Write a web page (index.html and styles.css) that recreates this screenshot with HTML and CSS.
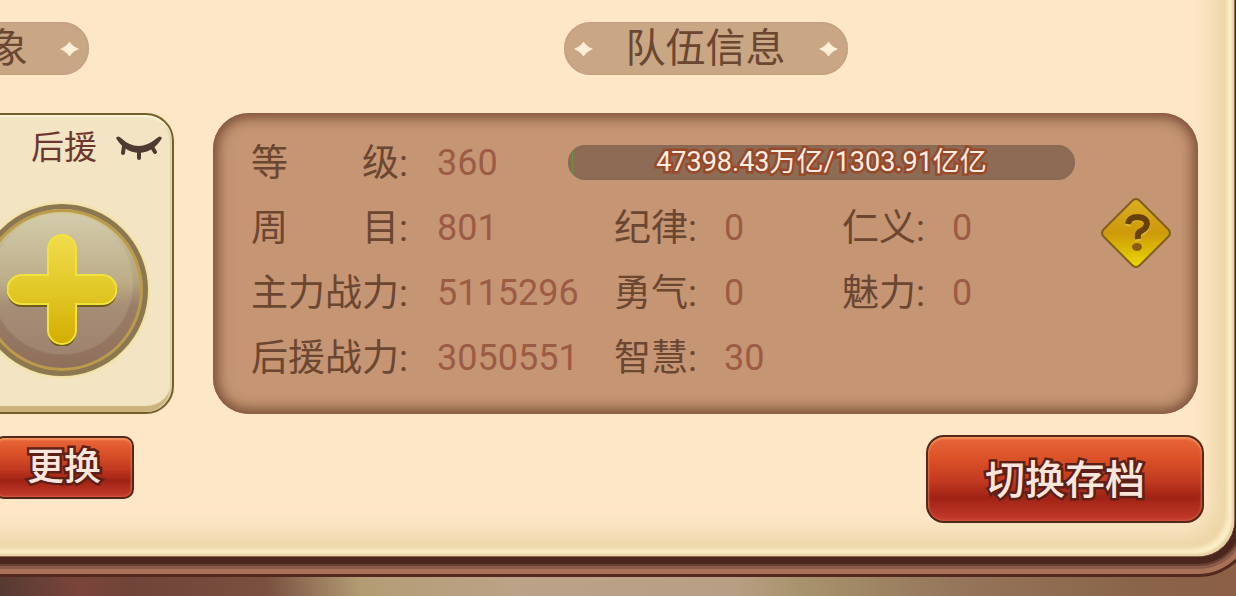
FILE: index.html
```html
<!DOCTYPE html>
<html lang="zh-CN">
<head>
    <meta charset="UTF-8">
    <meta name="viewport" content="width=device-width, initial-scale=1.0">
    <title>队伍信息</title>
    <link rel="stylesheet" href="styles.css">
</head>
<body>
    <main class="dialog">
        <section class="side">
            <h2 class="title side-title">
                象
                <svg class="star" viewBox="0 0 20 16"><path d="M10 0Q13 5 20 8Q13 11 10 16Q7 11 0 8Q7 5 10 0Z"/></svg>
            </h2>
            <div class="card">
                <div class="card-head">
                    <span class="card-name">后援</span>
                    <button class="eye" aria-label="隐藏">
                        <svg viewBox="0 0 46 24" width="46" height="24">
                            <path class="lid" d="M0 2Q2 -1 5 2Q22 18 41 2Q44 -1 46 2Q38 16 23 17Q8 16 0 2Z"/>
                            <path class="lash" d="M8 10L7 17M23 14V22M36 11L39 16"/>
                        </svg>
                    </button>
                </div>
                <button class="add" aria-label="添加后援">
                    <svg viewBox="0 0 110 112" width="110" height="112">
                        <defs>
                            <linearGradient id="gold" x1="0" y1="0" x2="0" y2="1">
                                <stop offset="0" stop-color="#f0dc4c"/>
                                <stop offset="0.5" stop-color="#e2c828"/>
                                <stop offset="1" stop-color="#d2ae00"/>
                            </linearGradient>
                        </defs>
                        <path class="plus-shadow" d="M41 18a14 14 0 0 1 28 0V44H95a14 14 0 0 1 0 29H69V99a14 14 0 0 1-28 0V73H15a14 14 0 0 1 0-29H41Z"/>
                        <path class="plus" d="M41 15a14 14 0 0 1 28 0V41H95a14 14 0 0 1 0 29H69V96a14 14 0 0 1-28 0V70H15a14 14 0 0 1 0-29H41Z"/>
                    </svg>
                </button>
            </div>
            <button class="btn btn-small">更换</button>
        </section>

        <section class="team">
            <h2 class="title team-title">
                <svg class="star" viewBox="0 0 20 16"><path d="M10 0Q13 5 20 8Q13 11 10 16Q7 11 0 8Q7 5 10 0Z"/></svg>
                队伍信息
                <svg class="star" viewBox="0 0 20 16"><path d="M10 0Q13 5 20 8Q13 11 10 16Q7 11 0 8Q7 5 10 0Z"/></svg>
            </h2>
            <div class="panel">
                <div class="stats">
                    <div class="row">
                        <span class="label label-main">等　　级:</span>
                        <span class="value value-level">360</span>
                        <div class="exp" role="progressbar" aria-label="经验">
                            <div class="exp-fill" style="width: 1%"></div>
                            <span class="exp-text">47398.43万亿/1303.91亿亿</span>
                        </div>
                    </div>
                    <div class="row">
                        <span class="label label-main">周　　目:</span>
                        <span class="value value-main">801</span>
                        <span class="label">纪律:</span>
                        <span class="value">0</span>
                        <span class="label">仁义:</span>
                        <span class="value">0</span>
                    </div>
                    <div class="row">
                        <span class="label label-main">主力战力:</span>
                        <span class="value value-main">5115296</span>
                        <span class="label">勇气:</span>
                        <span class="value">0</span>
                        <span class="label">魅力:</span>
                        <span class="value">0</span>
                    </div>
                    <div class="row">
                        <span class="label label-main">后援战力:</span>
                        <span class="value value-main">3050551</span>
                        <span class="label">智慧:</span>
                        <span class="value">30</span>
                    </div>
                </div>
                <button class="help" aria-label="帮助">
                    <svg viewBox="0 0 70 70" width="70" height="70">
                        <defs>
                            <linearGradient id="sign" x1="0" y1="0" x2="0" y2="1">
                                <stop offset="0" stop-color="#dcae24"/>
                                <stop offset="0.5" stop-color="#cc9a0a"/>
                                <stop offset="1" stop-color="#ecda00"/>
                            </linearGradient>
                        </defs>
                        <path class="sign" d="M31 3Q35 -1 39 3L67 31Q71 35 67 39L39 67Q35 71 31 67L3 39Q-1 35 3 31Z"/>
                        <path class="mark-light" d="M27 28Q28 20 37 20Q46 21 46 28Q45 33 40 35Q36 37 37 43"/>
                        <path class="mark" d="M27 26Q28 19 37 19Q46 20 46 26Q45 31 40 33Q36 35 37 41"/>
                        <ellipse class="dot" cx="36" cy="49" rx="5" ry="4"/>
                    </svg>
                </button>
            </div>
            <button class="btn btn-large">切换存档</button>
        </section>
    </main>
</body>
</html>
```
FILE: styles.css
```css
* {
    box-sizing: border-box;
}
body {
    margin: 0;
    min-height: 100vh;
    overflow: hidden;
    font-family: Roboto, "Noto Sans CJK SC", sans-serif;
    background: linear-gradient(80deg, #563a32 0%, #7a443a 6%, #704438 10%, #7a5040 20%, #b39c74 27%, #bca286 38%, #b89e82 55%, #a8926c 60%, #94745a 72%, #8a6448 85%, #8a5a44 100%);
}
button {
    padding: 0;
    border: none;
    background: none;
    font-family: inherit;
    cursor: pointer;
}
svg {
    display: block;
}

/* dialog frame runs past the left, top and right edges */
.dialog {
    display: flex;
    gap: 39px;
    margin-right: 2px;
    padding: 22px 30px 33px 0;
    border-radius: 0 0 36px 0;
    background: #fee7c7;
    box-shadow:
        inset -2px -2px 2px #e8cfa4,
        inset -7px -7px 4px #fbeec6,
        inset -16px -16px 16px #ecd5a5,
        inset -28px -28px 24px #f6dfb9,
        0 0 0 1px #8a6c4c,
        0 0 0 8px #4a261f,
        0 0 0 10px #684032,
        0 0 0 13px #885a47,
        0 0 0 18px #a87158,
        0 0 0 21px #52281f;
}
.side {
    display: flex;
    flex-direction: column;
    width: 220px;
    margin-left: -46px;
}
.team {
    display: flex;
    flex-direction: column;
    flex: 1;
}

.title {
    display: flex;
    align-items: center;
    height: 53px;
    margin: 0 0 38px;
    padding: 0 10px;
    border-radius: 27px;
    background: #c9a684;
    box-shadow: inset 0 0 2px #b08e78;
    color: #6b4630;
    font-size: 40px;
    font-weight: 400;
    line-height: 53px;
}
.side-title {
    justify-content: flex-end;
    gap: 32px;
    width: 135px;
}
.team-title {
    justify-content: space-between;
    align-self: center;
    width: 284px;
    margin-right: 6px;
}
.star {
    width: 19px;
    height: 16px;
    fill: #ffefd8;
}

.card {
    height: 301px;
    border: 2px solid #75602a;
    border-radius: 28px;
    background: #f3e5c3;
    box-shadow: inset 0 2px 2px #fff8dc, inset -2px 0 1px #d8cb9c, inset 0 -6px 1px #cbb27c;
}
.card-head {
    display: grid;
    grid-template-columns: 1fr auto 1fr;
    align-items: center;
    height: 66px;
    padding: 0 10px;
}
.card-name {
    grid-column: 2;
    padding-bottom: 6px;
    color: #6c3830;
    font-size: 33px;
}
.eye {
    justify-self: end;
}
.lid {
    fill: #4e3a30;
}
.lash {
    fill: none;
    stroke: #4e3a30;
    stroke-width: 4;
    stroke-linecap: round;
}
.add {
    display: flex;
    align-items: center;
    justify-content: center;
    width: 172px;
    height: 172px;
    margin: 23px 24px 0 auto;
    border: 5px solid #8c7850;
    border-radius: 50%;
    background:
        radial-gradient(circle at 50% 46%, rgba(255, 255, 230, 0.12) 70px, transparent 72px),
        linear-gradient(#cfc7a6, #b4a27c 45%, #9a7d66 60%, #8e6f5c);
    box-shadow: inset 0 0 0 3px #bc9c4c, inset 0 3px 3px #d8c860, 0 0 4px #f0dc70;
}
.plus {
    fill: url(#gold);
    stroke: #f2e23c;
    stroke-width: 2;
}
.plus-shadow {
    fill: #6e5c14;
}

.btn {
    border: 2px solid #54271a;
    color: #fbe6dc;
    font-weight: 500;
    background: linear-gradient(#e8663a, #dc5228 25%, #c23a20 52%, #a02214 72%, #c43c2c 100%);
    box-shadow: inset 0 2px 2px #f4925c, inset 0 0 3px #e07850;
    -webkit-text-stroke: 5px #5c2018;
    paint-order: stroke fill;
}
.btn-small {
    align-self: center;
    width: 140px;
    height: 63px;
    margin-top: 22px;
    border-radius: 10px;
    font-size: 37px;
    line-height: 59px;
}
.btn-large {
    align-self: flex-end;
    width: 278px;
    height: 88px;
    margin-top: 21px;
    padding-top: 4px;
    border-radius: 18px;
    font-size: 40px;
    line-height: 80px;
}

.panel {
    display: flex;
    align-items: flex-start;
    gap: 26px;
    height: 301px;
    margin-right: 6px;
    padding: 17px 27px 0 38px;
    border-radius: 36px;
    background: #c69574;
    box-shadow: inset 0 0 8px 4px #85563f, inset 0 0 12px 10px #ac8260;
}
.stats {
    flex: 1;
}
.row {
    display: flex;
    align-items: center;
    height: 65px;
    white-space: nowrap;
}
.label {
    width: 110px;
    padding-bottom: 6px;
    color: #6b4630;
    font-size: 37px;
}
.label-main {
    width: 186px;
}
.value {
    width: 118px;
    color: #9c5b45;
    font-size: 36px;
}
.value-main {
    width: 177px;
}
.value-level {
    width: 131px;
}
.exp {
    position: relative;
    flex: 1;
    height: 35px;
    border-radius: 18px;
    overflow: hidden;
    background: #8d6b54;
    box-shadow: inset 0 0 2px #77685a;
    text-align: center;
}
.exp-fill {
    position: absolute;
    top: 0;
    left: 0;
    height: 100%;
    border-right: 1px solid #6f9040;
}
.exp-text {
    position: relative;
    color: #fdeee4;
    font-size: 27px;
    line-height: 35px;
    -webkit-text-stroke: 5px #98492a;
    paint-order: stroke fill;
}
.help {
    margin-top: 68px;
}
.sign {
    fill: url(#sign);
    stroke: #80601c;
    stroke-width: 2;
}
.mark {
    fill: none;
    stroke: #68400c;
    stroke-width: 6;
}
.mark-light {
    fill: none;
    stroke: #dcb838;
    stroke-width: 6;
}
.dot {
    fill: #8a5c10;
}
```
